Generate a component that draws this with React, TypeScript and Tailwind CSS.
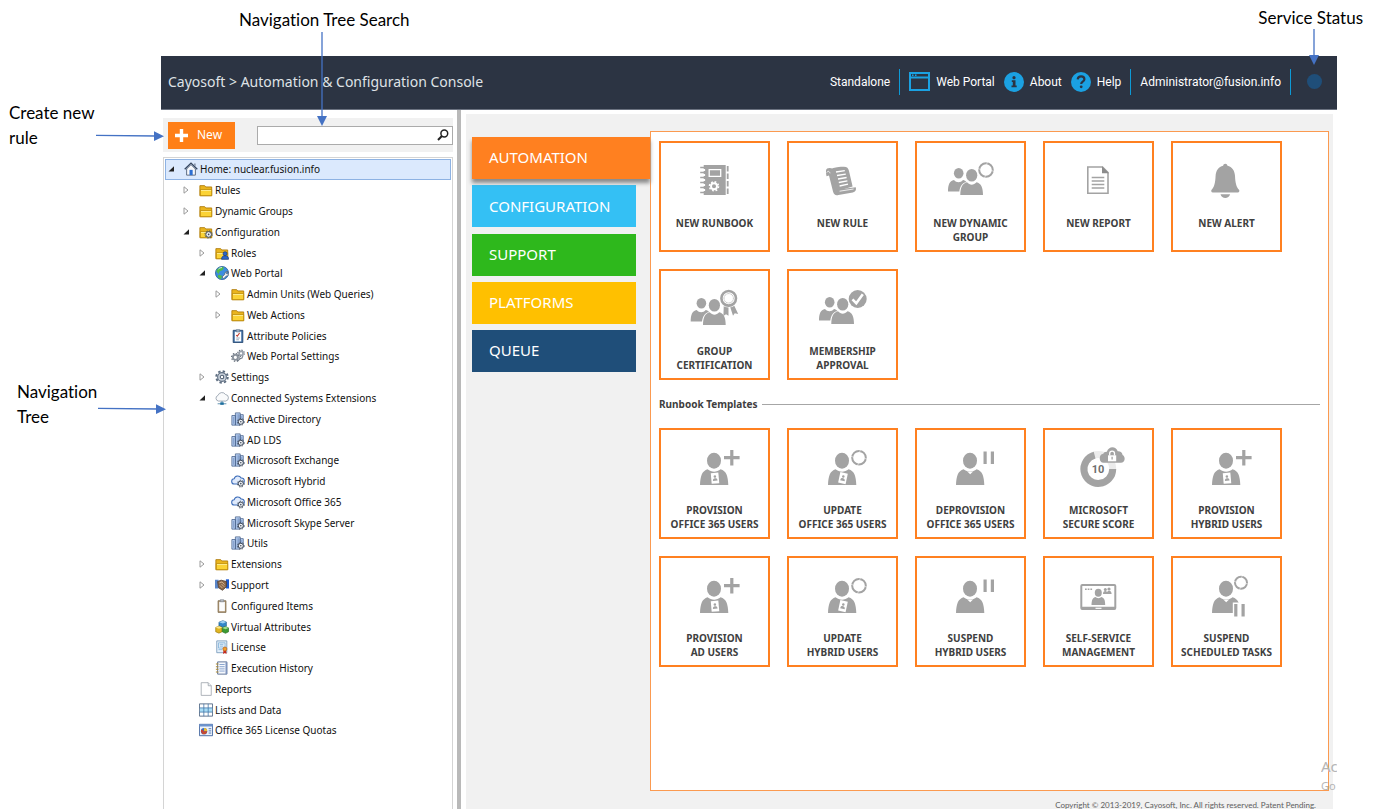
import React from "react";

const GREY = "#a3a3a3";

/* ---------- tree icons (16 x 16 grid) ---------- */

const MiniGear = ({ x, y, r = 3.6 }: { x: number; y: number; r?: number }) => (
  <g>
    <circle cx={x} cy={y} r={r + 1} fill="none" stroke="#4a5565" strokeWidth="1.1" strokeDasharray="1.600 1.700" />
    <circle cx={x} cy={y} r={r} fill="#eef1f5" stroke="#3c4655" strokeWidth="1.1" />
    <circle cx={x} cy={y} r={r * 0.3} fill="#3c4655" />
  </g>
);

const FolderShape = () => (
  <g>
    <path d="M1 3h5.500l1.200 1.500H14.500V14.500H1z" fill="#eab51e" stroke="#b07c08" strokeWidth="1" />
    <path d="M1.500 7.500H14.500V14.500H1.500z" fill="#fbd335" stroke="#b98609" strokeWidth=".9" />
    <path d="M2.300 8.500H13.800" stroke="#fff0a0" strokeWidth="1" />
  </g>
);

const CloudPath = "M4 11.5a3 3 0 0 1-.4-6A4.2 4.2 0 0 1 11.500 4.600a3.400 3.400 0 0 1 .5 6.900z";

const treeIcons: Record<string, React.ReactNode> = {
  home: (
    <g>
      <path d="M3 8v7h10V8L8 3z" fill="#f6f8fb" stroke="#4b5b74" />
      <path d="M.8 8.300 8 1.200l7.200 7.100" fill="none" stroke="#35465f" strokeWidth="1.500" />
      <path d="M11.500 1.800h1.800v3.500l-1.800-1.700z" fill="#8492a8" />
      <path d="M6.300 9h3.600v6H6.300z" fill="#2d6fd2" />
    </g>
  ),
  folder: <FolderShape />,
  folderGear: (
    <g>
      <FolderShape />
      <MiniGear x={11} y={10.800} r={3.200} />
    </g>
  ),
  folderUser: (
    <g>
      <FolderShape />
      <circle cx="11.500" cy="8.800" r="2.300" fill="#2c66c9" stroke="#173a80" strokeWidth=".8" />
      <path d="M7.500 15.200c0-3 1.500-4 4-4s4 1 4 4z" fill="#2c66c9" stroke="#173a80" strokeWidth=".8" />
    </g>
  ),
  globe: (
    <g>
      <circle cx="8" cy="8" r="7.500" fill="#3c8de0" stroke="#2a5f9a" strokeWidth=".9" />
      <path d="M1.500 6c1.500-4 6-5.500 8.500-4.500L9 4.500l-3.500 1.500L4 9zM4 10l4 1-1 4c-2-.3-3.500-2-4-3z" fill="#52bb4a" />
      <path d="M4 3.500c1-1.200 2.500-1.700 4-1.700" stroke="#dff0ff" fill="none" />
      <path d="M15 6.500a2.800 2.800 0 0 0-3.800 3l-3.200 3 2 2 3-3.200a2.800 2.800 0 0 0 3-3.600l-1.500 1.400-1.300-.4-.3-1z" fill="#eef1f5" stroke="#4a5768" strokeWidth=".8" />
    </g>
  ),
  policy: (
    <g>
      <path d="M2.500 1.500h11v14h-11z" fill="#3d6ea6" stroke="#24466f" />
      <path d="M4.300 3h7.400v11.200H4.300z" fill="#fff" />
      <path d="M6 .8h4v2.600H6z" fill="#9fb2c8" stroke="#53677f" strokeWidth=".6" />
      <path d="M6 7l1.200 1.200 2.600-3.600" stroke="#c0392b" strokeWidth="1.200" fill="none" />
      <path d="M6 10.300h4M6 12.300h3" stroke="#8094ab" strokeWidth=".9" />
    </g>
  ),
  gears: (
    <g>
      <circle cx="5" cy="9.500" r="4.400" fill="none" stroke="#5c6672" strokeWidth="1.300" strokeDasharray="1.600 1.860" />
      <circle cx="5" cy="9.500" r="2.900" fill="none" stroke="#8a929c" strokeWidth="2.200" />
      <circle cx="11.500" cy="5" r="3.700" fill="none" stroke="#5c6672" strokeWidth="1.300" strokeDasharray="1.500 1.400" />
      <circle cx="11.500" cy="5" r="2.300" fill="none" stroke="#9aa2ac" strokeWidth="2" />
      <path d="M7 14.500l3-3.200 3.500-1.500" stroke="#6d7783" strokeWidth="1.300" fill="none" />
    </g>
  ),
  gear: (
    <g>
      <circle cx="8" cy="8" r="6.600" fill="none" stroke="#5d6d80" strokeWidth="2.200" strokeDasharray="2.700 2.480" />
      <circle cx="8" cy="8" r="5" fill="#c9d1db" stroke="#5d6d80" strokeWidth="1.200" />
      <circle cx="8" cy="8" r="2" fill="#fff" stroke="#4e5d70" strokeWidth="1.200" />
    </g>
  ),
  cloudNet: (
    <g>
      <path d="M4 11.500a3.300 3.300 0 0 1-.6-6.400A4.800 4.800 0 0 1 12 4a3.800 3.800 0 0 1 .3 7.500z" fill="#f9fafb" stroke="#8b97a5" strokeWidth=".9" />
      <path d="M8 11.500v2M3 14.600h10" stroke="#4e86a8" strokeWidth="1" />
      <path d="M6 13h4v2.800H6z" fill="#1e6f9e" />
    </g>
  ),
  server: (
    <g>
      <path d="M1 4h4v11H1zM5 1h5.500v14H5zM10.500 3H14v10h-3.500z" fill="#bcd3f5" stroke="#4a648c" strokeWidth=".9" />
      <path d="M3 5.500v8M7 2.500v11M8.700 2.500v11M12.300 4.500v4" stroke="#5c7cb0" strokeWidth=".7" />
      <MiniGear x={11.200} y={11.200} r={2.900} />
    </g>
  ),
  cloudGear: (
    <g>
      <path d={CloudPath} fill="#dfeafc" stroke="#3c6cb8" strokeWidth="1.200" />
      <MiniGear x={11.200} y={11} r={2.900} />
    </g>
  ),
  support: (
    <g>
      <path d="M0 2h4v10H0z" fill="#5a86c9" />
      <path d="M12.500 1.500H16V12h-3.500z" fill="#1c5bd0" />
      <path d="M3 4l4-1.500L13 4v6l-4.500 4L4 11z" fill="#8d6a4c" stroke="#4d3a2b" strokeWidth=".9" />
      <path d="M5 5.500l3-1 3 3M5.500 8.500l3 3M7.500 7l3 3" stroke="#d9b998" strokeWidth="1" fill="none" />
    </g>
  ),
  clipboard: (
    <g>
      <path d="M3.500 2h9v13.300h-9z" fill="#b39a78" stroke="#7b6748" strokeWidth=".9" />
      <path d="M4.800 3.300h6.500v10.600H4.800z" fill="#fbfcfd" />
      <path d="M6 .8h4v2.400H6z" fill="#b8bec6" stroke="#6f7680" strokeWidth=".6" />
    </g>
  ),
  cubes: (
    <g>
      <path d="M4.500 2.500L9 .8l4 1.500v4.800L9 8.500 4.500 7z" fill="#3287c9" stroke="#1c5586" strokeWidth=".7" />
      <path d="M4.500 2.500L9 4l4-1.700L9 .8z" fill="#9ed0f2" />
      <path d="M.8 8.500l4-1.500 3.500 1.500v4.800L4.500 15 .8 13.500z" fill="#e0b521" stroke="#937207" strokeWidth=".7" />
      <path d="M.8 8.500L4.500 10l3.800-1.500L4.800 7z" fill="#fbe88a" />
      <path d="M8.300 9l3.500-1.500L15.500 9v4.500L12 15.200l-3.700-1.700z" fill="#3c9a33" stroke="#236a1c" strokeWidth=".7" />
      <path d="M8.300 9l3.700 1.500L15.500 9l-3.700-1.500z" fill="#a0dd8f" />
    </g>
  ),
  license: (
    <g>
      <path d="M2 1h11.500v13.500H2z" fill="#e4f0fa" stroke="#7c9dbd" />
      <path d="M4 3.200h7.500v6H4z" fill="none" stroke="#7fb0d8" strokeWidth=".9" />
      <path d="M5.500 5h4M5.500 7h4M4 11h4" stroke="#7fb0d8" strokeWidth=".9" />
      <path d="M9.800 11l-.6 5 2-1.200 2 1.200-.6-5z" fill="#c6281d" />
      <circle cx="11.300" cy="10.300" r="2.300" fill="#f0a02c" stroke="#bb5a12" strokeWidth=".8" />
    </g>
  ),
  notebook: (
    <g>
      <path d="M3 1h10.500v14H3z" fill="#f5f8fd" stroke="#50678f" />
      <path d="M12 1.500h2V15h-2z" fill="#7c93bd" />
      <path d="M5 4h6M5 6.500h6M5 9h6M5 11.500h6" stroke="#6f8fc2" strokeWidth=".9" />
      <path d="M1 3.500h3M1 6.500h3M1 9.500h3M1 12.500h3" stroke="#b08a2e" strokeWidth="1.200" />
    </g>
  ),
  page: (
    <g>
      <path d="M2.500.8h8l3.500 3.500v11H2.500z" fill="#fff" stroke="#9aa1a8" strokeWidth=".9" />
      <path d="M10.500.8v3.500H14" fill="#eef1f4" stroke="#9aa1a8" strokeWidth=".9" />
    </g>
  ),
  grid: (
    <g>
      <path d="M.5 1h15v14H.5z" fill="#fff" stroke="#4d6480" />
      <path d="M1 5.600h14v4.800H1z" fill="#a8dcf5" />
      <path d="M5.500 1v14M10.500 1v14M.5 5.600h15M.5 10.400h15" stroke="#4377a8" strokeWidth=".9" />
    </g>
  ),
  quota: (
    <g>
      <path d="M.5 1.500h15v13H.5z" fill="#eef3fb" stroke="#3a5f9a" />
      <path d="M.5 1.500h15v2.500H.5z" fill="#6d93cd" />
      <circle cx="5.800" cy="9.300" r="3.600" fill="#2f6fce" />
      <path d="M5.800 9.300V5.700a3.600 3.600 0 0 1 3.600 3.600z" fill="#f2bd2a" />
      <path d="M5.800 9.300L3 11.600a3.600 3.600 0 0 1 0-4.600z" fill="#d63c28" />
      <path d="M5.800 9.300h3.600a3.600 3.600 0 0 1-6.400 2.300z" fill="#c94a2d" />
      <path d="M11 6.500h3M11 9h3M11 11.500h3" stroke="#3f6db0" />
    </g>
  ),
};

type Row = { level: 0 | 1 | 2 | 3; icon: string; text: string; state?: "open" | "closed" };

const rows: Row[] = [
  { level: 0, icon: "home", text: "Home: nuclear.fusion.info", state: "open" },
  { level: 1, icon: "folder", text: "Rules", state: "closed" },
  { level: 1, icon: "folder", text: "Dynamic Groups", state: "closed" },
  { level: 1, icon: "folderGear", text: "Configuration", state: "open" },
  { level: 2, icon: "folderUser", text: "Roles", state: "closed" },
  { level: 2, icon: "globe", text: "Web Portal", state: "open" },
  { level: 3, icon: "folder", text: "Admin Units (Web Queries)", state: "closed" },
  { level: 3, icon: "folder", text: "Web Actions", state: "closed" },
  { level: 3, icon: "policy", text: "Attribute Policies" },
  { level: 3, icon: "gears", text: "Web Portal Settings" },
  { level: 2, icon: "gear", text: "Settings", state: "closed" },
  { level: 2, icon: "cloudNet", text: "Connected Systems Extensions", state: "open" },
  { level: 3, icon: "server", text: "Active Directory" },
  { level: 3, icon: "server", text: "AD LDS" },
  { level: 3, icon: "server", text: "Microsoft Exchange" },
  { level: 3, icon: "cloudGear", text: "Microsoft Hybrid" },
  { level: 3, icon: "cloudGear", text: "Microsoft Office 365" },
  { level: 3, icon: "server", text: "Microsoft Skype Server" },
  { level: 3, icon: "server", text: "Utils" },
  { level: 2, icon: "folder", text: "Extensions", state: "closed" },
  { level: 2, icon: "support", text: "Support", state: "closed" },
  { level: 2, icon: "clipboard", text: "Configured Items" },
  { level: 2, icon: "cubes", text: "Virtual Attributes" },
  { level: 2, icon: "license", text: "License" },
  { level: 2, icon: "notebook", text: "Execution History" },
  { level: 1, icon: "page", text: "Reports" },
  { level: 1, icon: "grid", text: "Lists and Data" },
  { level: 1, icon: "quota", text: "Office 365 License Quotas" },
];

const indent = ["pl-[2px]", "pl-[17px]", "pl-[33px]", "pl-[49px]"];

function Tree() {
  return (
    <ul className="flex h-[582px] flex-col">
      {rows.map((r, i) => (
        <li
          key={r.text}
          className={`flex flex-1 items-center border ${indent[r.level]} ${
            i === 0 ? "border-[#8db2e3] bg-[#dbe9fd]" : "border-transparent"
          }`}
        >
          <span className="flex w-4 shrink-0 items-center">
            {r.state && (
              <button type="button" aria-label={r.state === "open" ? "Collapse" : "Expand"} aria-expanded={r.state === "open"}>
                <svg className="block h-2 w-[7px]" viewBox="0 0 7 8">
                  {r.state === "open" ? (
                    <path d="M6 1.300V6.500H.5z" fill="#222" />
                  ) : (
                    <path d="M1 .8v6.400L5 4z" fill="#fff" stroke="#9a9a9a" />
                  )}
                </svg>
              </button>
            )}
          </span>
          <a href="#" className="flex items-center gap-[2px] whitespace-nowrap text-[10px] leading-4 text-[#111]">
            <svg className="block size-[14px] shrink-0" viewBox="0 0 16 16">
              {treeIcons[r.icon]}
            </svg>
            {r.text}
          </a>
        </li>
      ))}
    </ul>
  );
}

/* ---------- tile drawings (share the tile's own coordinates) ---------- */

const Ring = ({ x, y, r = 6.500 }: { x: number; y: number; r?: number }) => (
  <g>
    <circle cx={x} cy={y} r={r} fill="none" stroke={GREY} strokeWidth="2" />
    <path
      d={`M${x - r - 1.500} ${y - 1.500}l3 1M${x + r + 1.500} ${y + 1.500}l-3-1M${x + 1.500} ${y - r - 1.500}l-1 3M${x - 1.500} ${y + r + 1.500}l1-3`}
      stroke="#fff"
      strokeWidth=".5"
    />
  </g>
);

const People = ({ dx = 0, dy = 0 }: { dx?: number; dy?: number }) => (
  <g transform={`translate(${dx} ${dy})`} fill={GREY}>
    <ellipse cx="43.700" cy="32.300" rx="4.800" ry="5.300" />
    <path d="M33 50.600c0-7 1.500-10.500 6-11.600 2.500 3 6.500 3 9 0 1.500.4 2.600 1 3.300 2-4.600 1.300-6.300 4.600-7 9.600z" />
    <ellipse cx="56.700" cy="34.300" rx="5.600" ry="6.300" />
    <path d="M45.300 54c.1-7.500 2-11.500 6.700-12.700 2.800 3.200 6.700 3.200 9.500 0 4.700 1.200 6.500 5.200 6.500 12.700z" />
  </g>
);

const Person = () => (
  <g fill={GREY}>
    <ellipse cx="55" cy="32.700" rx="7" ry="8" />
    <path d="M41 57c.4-9 2-14 7.600-15.700 3.800 3.200 9.200 3.200 13 0C67.300 43 69 48 69.300 57z" />
  </g>
);

const Badge = ({ tilt }: { tilt: number }) => (
  <g transform={`rotate(${tilt} 56 50)`}>
    <path d="M52.200 44.800h7.600v10.700h-7.600z" fill="#fff" />
    <circle cx="56" cy="48.500" r="1.300" fill={GREY} />
    <path d="M53.700 52.800c0-2 .9-2.600 2.300-2.600s2.300.6 2.300 2.600z" fill={GREY} />
  </g>
);

const Pause = ({ x, y }: { x: number; y: number }) => (
  <path d={`M${x} ${y}h3.200v12.500h-3.200zM${x + 7.300} ${y}h3.200v12.500h-3.200z`} fill={GREY} />
);

const provision = (
  <g>
    <Person />
    <Badge tilt={-5} />
    <path d="M72.800 22v15.400M65 29.700h15.600" stroke={GREY} strokeWidth="3.200" />
  </g>
);
const update = (
  <g>
    <Person />
    <Badge tilt={12} />
    <Ring x={72} y={29.700} r={6.800} />
  </g>
);
const suspend = (
  <g>
    <Person />
    <path d="M52 43.300l3.200 3 3.200-3c-2 .9-4.400.9-6.400 0z" fill="#fff" />
    <Pause x={68.500} y={23.500} />
  </g>
);

const art: Record<string, React.ReactNode> = {
  runbook: (
    <g>
      <path d="M44.700 24h22v30h-22z" fill={GREY} />
      <path d="M41.500 29h4.600M41.500 34h4.600M41.500 39h4.600M41.500 44h4.600M41.500 49h4.600" stroke="#fff" strokeWidth="1.800" />
      <path d="M41.200 26.500h4.500M41.200 31.500h4.500M41.200 36.500h4.500M41.200 41.500h4.500M41.200 46.500h4.500M41.200 51.500h4.500" stroke={GREY} strokeWidth="1.500" />
      <path d="M50.200 28.700h11.500v6.600H50.200z" fill="none" stroke="#fff" strokeWidth="1.300" />
      <circle cx="55" cy="45.300" r="3" fill="none" stroke="#fff" strokeWidth="1.900" />
      <circle cx="55" cy="45.300" r="4.500" fill="none" stroke="#fff" strokeWidth="1.600" strokeDasharray="1.770 1.770" />
      <path d="M68.700 25v28" stroke={GREY} strokeWidth="1.800" strokeDasharray="5.500 2" />
    </g>
  ),
  rule: (
    <g>
      <path d="M43 28.500c4-2.500 10-2.800 14-2.800 3 0 4.400 1.500 5 4.300l3.600 15.500-15 4.500-4.800-16z" fill={GREY} />
      <path d="M39 29.500c0-2 2-2.700 4-2.600 3 .3 4.700 2.600 5.600 6l4 15.600c.8 3.300-.3 5.500-2.600 5.700-2 .1-3.200-1-4-3.700l-4-16-2.500.7c-.5-2.300-.5-3.700-.5-5.700z" fill={GREY} />
      <path d="M50.500 48.500l18.300-2.300c.8 2.700-.3 4.500-3 5.200L50 54.300z" fill={GREY} />
      <path d="M49 31l8.800-1.300M50 34.500l8.800-1.400M51 38l8.600-1.500M51.800 41.500l8.600-1.700M52.600 45l8.400-1.800" stroke="#fff" strokeWidth="1.300" />
      <path d="M39.800 31.500c1-1.800 2.600-1.500 3.200.8M52.600 50.200l14-2.200" stroke="#fff" strokeWidth=".8" fill="none" />
    </g>
  ),
  dynamic: (
    <g>
      <People />
      <Ring x={71} y={29} r={6.800} />
    </g>
  ),
  report: (
    <g fill="none" stroke={GREY}>
      <path d="M44.800 26h14.700l5.500 5.500v20.800H44.800z" strokeWidth="1.600" />
      <path d="M59 25.200l7 7h-7z" fill="#8c8c8c" stroke="none" />
      <path d="M48.700 36.500h12.600M48.700 40h12.600M48.700 43.500h12.600M48.700 47h12.600" strokeWidth="1.300" />
    </g>
  ),
  alert: (
    <g fill={GREY}>
      <path d="M54.300 22.700c1.200 0 2 .8 2.200 2 4.500 1.200 7.200 4.800 7.500 10 .3 7.300 1.500 11.500 4 14 .8 1 .3 2.800-1.200 2.800h-25c-1.500 0-2-1.800-1.200-2.800 2.500-2.500 3.700-6.700 4-14 .3-5.200 3-8.800 7.500-10 .2-1.200 1-2 2.200-2z" />
      <path d="M49.500 53.200h9.600c-.8 2.500-2.500 3.800-4.800 3.800s-4-1.300-4.800-3.800z" />
    </g>
  ),
  certification: (
    <g>
      <People dx={-1.300} dy={2} />
      <path d="M64.800 36l-.4 11 2.600-1.800 2.500 1.600V37.500M71 37.500l3 9.300 1.800-2.500 3.400.6L74.500 35z" fill={GREY} />
      <circle cx="69.700" cy="29.300" r="9.300" fill="#fff" />
      <circle cx="69.700" cy="29.300" r="7.300" fill="none" stroke={GREY} strokeWidth="2.600" />
      <circle cx="69.700" cy="29.300" r="4.700" fill="none" stroke={GREY} strokeWidth=".8" strokeDasharray="1 .5" />
    </g>
  ),
  approval: (
    <g>
      <People dx={-1} dy={1} />
      <circle cx="70.700" cy="30" r="9" fill={GREY} />
      <path d="M65.500 30.300l3.800 4 6.500-9" fill="none" stroke="#fff" strokeWidth="2.600" />
    </g>
  ),
  provision,
  update,
  suspend,
  score: (
    <g>
      <circle cx="55.300" cy="41" r="14.400" fill="none" stroke="#ececec" strokeWidth="7" />
      <path d="M51.600 27.100A14.400 14.400 0 1 0 69.700 41" fill="none" stroke={GREY} strokeWidth="7" />
      <text x="55" y="44.500" textAnchor="middle" fontSize="11" fontWeight="700" fill="#6f6f6f" fontFamily="Roboto, sans-serif">
        10
      </text>
      <path d="M60.500 34.800a4.600 4.600 0 0 1-.2-9c.6-1.500 2-2.300 3.600-2 1.500-5.800 9-6 10.800-.6 2.800-.2 4.600 1.300 4.900 3.700 3.300 1.800 2.600 7.700-1.600 7.900z" fill={GREY} />
      <path d="M65 27.300h8.200v6H65z" fill="#fff" />
      <path d="M66.700 27.500v-2.200c0-3 4.800-3 4.800 0v2.200" fill="none" stroke="#fff" strokeWidth="1.300" />
      <path d="M69.100 28.800v2.800" stroke={GREY} strokeWidth="1.300" />
    </g>
  ),
  selfService: (
    <g>
      <rect x="38.300" y="29" width="34" height="24" rx="1" fill="none" stroke={GREY} strokeWidth="2" />
      <path d="M38.300 52h34" stroke={GREY} strokeWidth="2.400" />
      <path d="M52.500 52.300h6" stroke="#fff" strokeWidth="1.200" />
      <path d="M42 33.300h1.700M44.700 33.300h1.700M47.400 33.300h1.700" stroke={GREY} strokeWidth="1.400" />
      <ellipse cx="55.300" cy="36.700" rx="3.500" ry="4" fill={GREY} />
      <path d="M48.500 49c.2-4.700 1-7.200 3.700-8 1.900 1.500 4.500 1.500 6.300 0 2.800.8 3.600 3.300 3.700 8z" fill={GREY} />
      <circle cx="62.300" cy="33.500" r="1.500" fill={GREY} />
      <circle cx="66" cy="33" r="1.600" fill={GREY} />
      <path d="M60 38c0-2 .8-3 2.300-3s2 .7 2 3zM63.800 38c0-2.200.8-3.300 2.400-3.300S68.600 36 68.600 38z" fill={GREY} />
    </g>
  ),
  scheduled: (
    <g>
      <Person />
      <path d="M52 43.300l3.200 3 3.200-3c-2 .9-4.400.9-6.400 0z" fill="#fff" />
      <path d="M61.800 46.500h8.500v14h-8.500z" fill="#fff" />
      <Ring x={70} y={26.700} r={6} />
      <Pause x={63.200} y={48} />
    </g>
  ),
};

type Tile = { art: string; lines: string[] };

const automationTiles: Tile[] = [
  { art: "runbook", lines: ["NEW RUNBOOK"] },
  { art: "rule", lines: ["NEW RULE"] },
  { art: "dynamic", lines: ["NEW DYNAMIC", "GROUP"] },
  { art: "report", lines: ["NEW REPORT"] },
  { art: "alert", lines: ["NEW ALERT"] },
  { art: "certification", lines: ["GROUP", "CERTIFICATION"] },
  { art: "approval", lines: ["MEMBERSHIP", "APPROVAL"] },
];

const templateTiles: Tile[] = [
  { art: "provision", lines: ["PROVISION", "OFFICE 365 USERS"] },
  { art: "update", lines: ["UPDATE", "OFFICE 365 USERS"] },
  { art: "suspend", lines: ["DEPROVISION", "OFFICE 365 USERS"] },
  { art: "score", lines: ["MICROSOFT", "SECURE SCORE"] },
  { art: "provision", lines: ["PROVISION", "HYBRID USERS"] },
  { art: "provision", lines: ["PROVISION", "AD USERS"] },
  { art: "update", lines: ["UPDATE", "HYBRID USERS"] },
  { art: "suspend", lines: ["SUSPEND", "HYBRID USERS"] },
  { art: "selfService", lines: ["SELF-SERVICE", "MANAGEMENT"] },
  { art: "scheduled", lines: ["SUSPEND", "SCHEDULED TASKS"] },
];

function Tiles({ items }: { items: Tile[] }) {
  return (
    <div className="flex flex-wrap gap-[17px]">
      {items.map((t) => (
        <button
          key={t.lines.join(" ")}
          type="button"
          className="flex size-[111px] flex-col items-center border-2 border-[#ff8020] bg-white text-[10px] font-bold leading-[14px] text-[#404040]"
        >
          <svg className="block h-[73px] w-[107px] shrink-0" viewBox="2 2 107 73">
            {art[t.art]}
          </svg>
          {t.lines.map((l) => (
            <span key={l} className="whitespace-nowrap">
              {l}
            </span>
          ))}
        </button>
      ))}
    </div>
  );
}

/* ---------- header ---------- */

const Divider = () => <span className="h-[26px] border-l border-[#0d9ad6]" />;

function Header() {
  return (
    <header className="flex h-[54px] items-center justify-between border-b border-[#6b7280] bg-[#2c3443] pb-[2px] pl-[7px] pr-[15px] text-white">
      <h1 className="whitespace-nowrap text-[14px] text-[#dfe2e6]">Cayosoft &gt; Automation &amp; Configuration Console</h1>
      <nav className="flex items-center gap-[9px] whitespace-nowrap font-['Roboto',sans-serif] text-[12px]">
        <span>Standalone</span>
        <Divider />
        <a href="#" className="flex items-center gap-[6px]">
          <svg className="block h-[19px] w-[21px]" viewBox="0 0 21 19">
            <path d="M1 1h19v17H1zM1 5.500h19" fill="none" stroke="#1ba1e2" strokeWidth="2" />
            <path d="M3 3.200h1.500M6 3.200h1.500" stroke="#1ba1e2" strokeWidth="1.500" />
          </svg>
          Web Portal
        </a>
        <a href="#" className="flex items-center gap-[6px]">
          <svg className="block size-5" viewBox="0 0 20 20">
            <circle cx="10" cy="10" r="10" fill="#1ba1e2" />
            <circle cx="10" cy="5.700" r="1.600" fill="#2c3443" />
            <path d="M7.800 8.300h3.700v5.200h1.200v1.800H7.500v-1.800h1.300v-3.400h-1z" fill="#2c3443" />
          </svg>
          About
        </a>
        <a href="#" className="flex items-center gap-[6px]">
          <svg className="block size-5" viewBox="0 0 20 20">
            <circle cx="10" cy="10" r="10" fill="#1ba1e2" />
            <path d="M6.700 7.400C6.900 5.300 8.200 4.300 10.100 4.300c2 0 3.300 1.200 3.300 2.900 0 2.500-3.200 2.400-3.200 4.700" fill="none" stroke="#2c3443" strokeWidth="2.200" />
            <circle cx="10.200" cy="14.800" r="1.400" fill="#2c3443" />
          </svg>
          Help
        </a>
        <Divider />
        <span>Administrator@fusion.info</span>
        <Divider />
        <span role="status" aria-label="Service status" className="ml-[7px] size-[15px] rounded-full bg-[#1f4e79]" />
      </nav>
    </header>
  );
}

/* ---------- side navigation ---------- */

function Sidebar() {
  return (
    <aside className="flex w-[290px] shrink-0 flex-col gap-[5px] pt-2">
      <div className="flex h-[34px] shrink-0 items-center gap-[22px] bg-[#f1f1f1] pl-[5px]">
        <button type="button" className="flex h-[27px] w-[67px] items-center gap-[9px] bg-[#ff7f17] pl-[7px] text-[12px] text-white">
          <svg className="block size-[13px]" viewBox="0 0 13 13">
            <path d="M6.500 0v13M0 6.500h13" stroke="#fff" strokeWidth="3.400" />
          </svg>
          New
        </button>
        <label className="flex h-[19px] flex-1 items-center border border-[#ababab] bg-white pr-[3px]">
          <input type="text" aria-label="Search the tree" className="h-full min-w-0 flex-1 bg-transparent px-1 text-[10px] outline-none" />
          <svg className="block size-3" viewBox="0 0 12 12" fill="none" stroke="#222">
            <circle cx="7.300" cy="4.500" r="3.400" strokeWidth="1.500" />
            <path d="M4.900 7L1 11" strokeWidth="2" />
          </svg>
        </label>
      </div>
      <nav className="flex-1 border-x border-t border-[#d4d4d4] px-px pt-px">
        <Tree />
      </nav>
    </aside>
  );
}

/* ---------- category tabs ---------- */

const tabs = [
  { text: "AUTOMATION", look: "relative z-10 w-[178px] bg-[#ff8020] shadow-[0_4px_4px_#8a8a8a]" },
  { text: "CONFIGURATION", look: "w-[164px] bg-[#34c0f4]" },
  { text: "SUPPORT", look: "w-[164px] bg-[#2eb81c]" },
  { text: "PLATFORMS", look: "w-[164px] bg-[#ffc000]" },
  { text: "QUEUE", look: "w-[164px] bg-[#1f4e79]" },
];

/* ---------- callouts ---------- */

const DownArrow = ({ length, place }: { length: number; place: string }) => (
  <svg className={`absolute z-20 w-3 ${place}`} viewBox={`0 0 12 ${length}`}>
    <path d={`M6 0V${length - 9}`} stroke="#4472c4" strokeWidth="1.300" />
    <path d={`M1 ${length - 10}H11L6 ${length}z`} fill="#4472c4" />
  </svg>
);

const RightArrow = ({ place }: { place: string }) => (
  <svg className={`absolute z-20 h-3 w-[68px] ${place}`} viewBox="0 0 68 12">
    <path d="M0 5.300L60 6" stroke="#4472c4" strokeWidth="1.300" />
    <path d="M58 1.200V11L68 6.300z" fill="#4472c4" />
  </svg>
);

export default function App() {
  return (
    <div className="relative flex h-screen flex-col overflow-hidden bg-white font-['Noto_Sans','Open_Sans',sans-serif]">
      <div className="flex h-14 shrink-0 items-start justify-between pl-[239px] pr-5 font-['Lato',sans-serif] text-[17px] leading-5 text-black [font-variant-ligatures:none]">
        <p className="pt-[10px]">Navigation Tree Search</p>
        <p className="pt-2">Service Status</p>
      </div>
      <DownArrow length={94} place="left-[316px] top-[32px] h-[94px]" />
      <DownArrow length={36} place="right-[63px] top-[29px] h-[36px]" />
      <RightArrow place="left-[96px] top-[130px]" />
      <RightArrow place="left-[98px] top-[403px]" />

      <div className="flex min-h-0 flex-1">
        <div className="flex w-[161px] shrink-0 flex-col gap-[229px] pt-[44px] font-['Lato',sans-serif] text-[17px] leading-[25px] text-black [font-variant-ligatures:none]">
          <p className="pl-[9px]">
            Create new
            <br />
            rule
          </p>
          <p className="pl-[17px]">
            Navigation
            <br />
            Tree
          </p>
        </div>

        <div className="relative mr-[46px] flex min-w-0 flex-1 flex-col overflow-hidden">
          <Header />
          <div className="flex min-h-0 flex-1 pl-[2px]">
            <Sidebar />
            <div className="ml-1 w-1 shrink-0 bg-[#b9b9b9]" />
            <main className="ml-[5px] mr-1 mt-1 flex min-w-0 flex-1 flex-col bg-[#f1f1f1] pl-[6px] pr-1 pt-[17px]">
              <div className="flex min-h-0 flex-1">
                <nav className="flex h-[241px] w-[178px] shrink-0 flex-col justify-between pt-[6px]">
                  {tabs.map((t) => (
                    <a key={t.text} href="#" className={`flex h-[42px] items-center pb-px pl-[17px] text-[15px] text-white ${t.look}`}>
                      {t.text}
                    </a>
                  ))}
                </nav>
                <section className="min-w-0 flex-1 border border-[#fb9a50] bg-white px-2 pt-[9px]">
                  <Tiles items={automationTiles} />
                  <div className="flex h-12 items-center gap-1">
                    <h2 className="text-[10px] font-bold text-[#404040]">Runbook Templates</h2>
                    <span className="h-px flex-1 bg-[#a6a6a6]" />
                  </div>
                  <Tiles items={templateTiles} />
                </section>
              </div>
              <footer className="h-[18px] shrink-0 pr-[13px] text-right font-['Lato',sans-serif] text-[8px] leading-[28px] text-[#606060]">
                Copyright © 2013-2019, Cayosoft, Inc. All rights reserved. Patent Pending.
              </footer>
            </main>
          </div>
          <div className="pointer-events-none absolute bottom-[13px] right-0 w-4 overflow-hidden whitespace-nowrap text-[#b5b5b5]">
            <p className="text-[15px] leading-5">Ac</p>
            <p className="text-[11px] leading-5">Go</p>
          </div>
        </div>
      </div>
    </div>
  );
}
